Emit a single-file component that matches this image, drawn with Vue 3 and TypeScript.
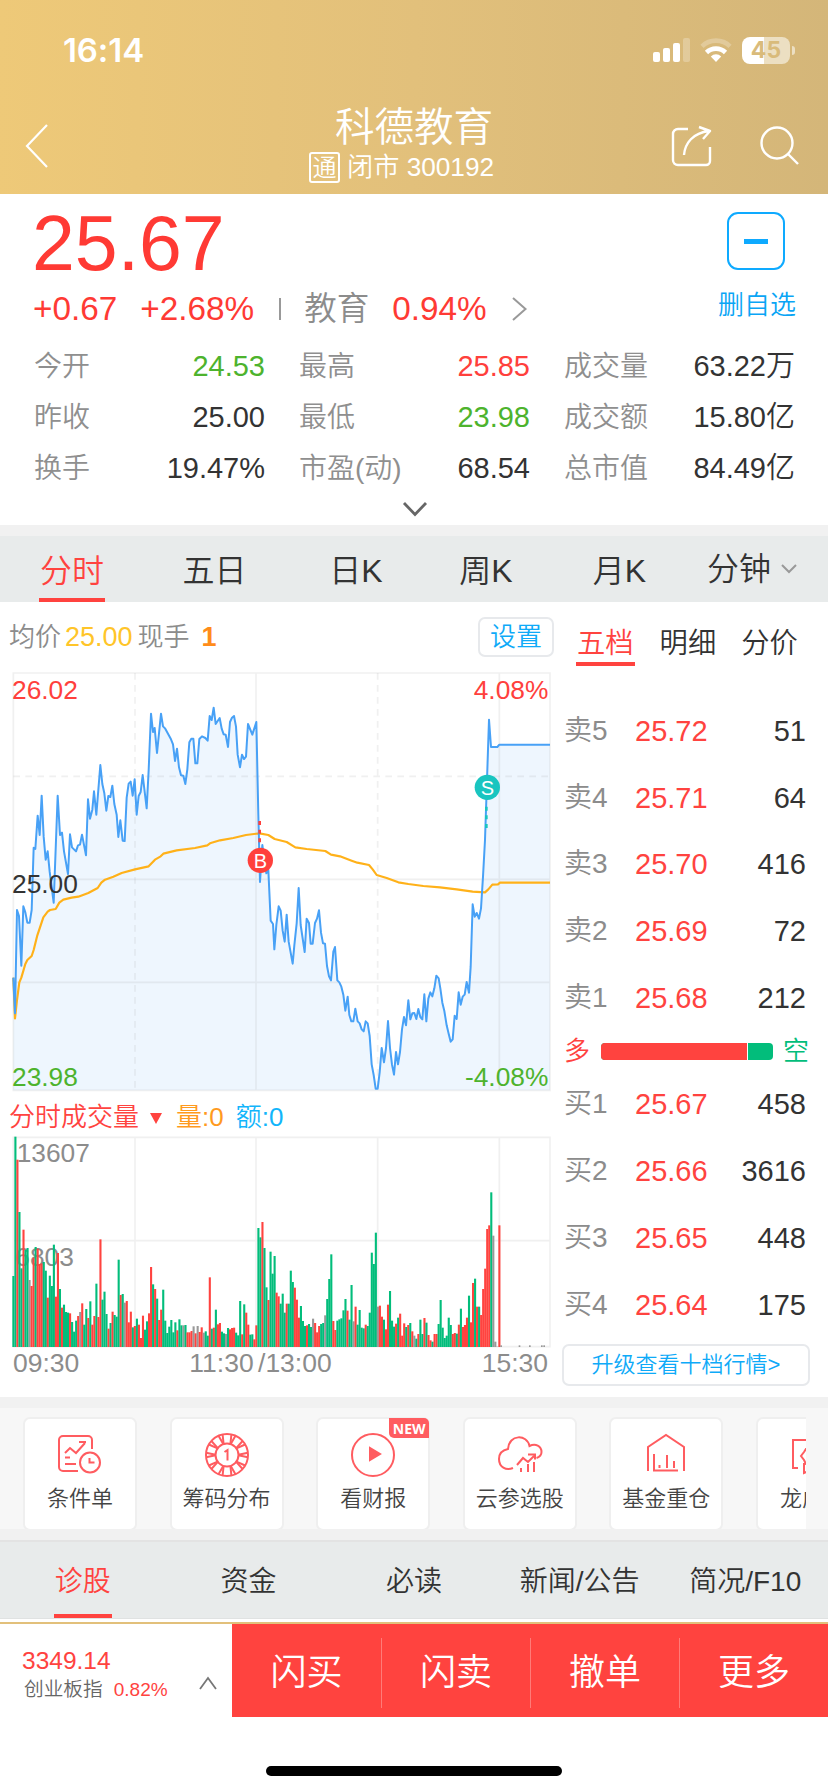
<script setup lang="ts">
interface Stat { label: string; value: string; tone?: 'up' | 'down' }
interface Quote { name: string; price: string; qty: string }
interface Bar { x: number; top: number; tone: string }

const stats: Stat[] = [
  { label: '今开', value: '24.53', tone: 'down' },
  { label: '最高', value: '25.85', tone: 'up' },
  { label: '成交量', value: '63.22万' },
  { label: '昨收', value: '25.00' },
  { label: '最低', value: '23.98', tone: 'down' },
  { label: '成交额', value: '15.80亿' },
  { label: '换手', value: '19.47%' },
  { label: '市盈(动)', value: '68.54' },
  { label: '总市值', value: '84.49亿' },
]

const asks: Quote[] = [
  { name: '卖5', price: '25.72', qty: '51' },
  { name: '卖4', price: '25.71', qty: '64' },
  { name: '卖3', price: '25.70', qty: '416' },
  { name: '卖2', price: '25.69', qty: '72' },
  { name: '卖1', price: '25.68', qty: '212' },
]
const bids: Quote[] = [
  { name: '买1', price: '25.67', qty: '458' },
  { name: '买2', price: '25.66', qty: '3616' },
  { name: '买3', price: '25.65', qty: '448' },
  { name: '买4', price: '25.64', qty: '175' },
]

const tools = ['条件单', '筹码分布', '看财报', '云参选股', '基金重仓', '龙虎榜']
const infoTabs = ['诊股', '资金', '必读', '新闻/公告', '简况/F10']
const actions = ['闪买', '闪卖', '撤单', '更多']

// Chart units are thirds of a pixel; the afternoon series starts at x = 810.
const AFTERNOON = 810
function shift(series: string): string {
  return series.split(' ').map((p) => {
    const [x, y] = p.split(',').map(Number)
    return `${x + AFTERNOON},${y}`
  }).join(' ')
}

const priceAm = '40,953 45,1060 51,750 57,768 64,917 70,739 76,757 82,788 89,788 95,750 101,563 106,567 113,467 119,525 125,407 131,530 137,599 143,574 149,635 161,728 173,407 180,525 186,518 192,574 204,642 210,523 216,562 228,574 234,556 240,554 246,524 258,586 264,418 270,476 277,449 282,394 289,464 301,315 307,372 313,400 319,452 325,408 331,411 337,377 343,432 350,464 355,531 361,481 368,542 374,543 380,413 386,371 392,365 398,407 404,358 410,464 416,408 422,396 428,345 440,445 446,330 453,161 459,216 464,204 471,279 483,161 489,199 495,205 513,238 519,253 525,303 531,266 537,322 543,346 550,347 556,372 562,328 568,247 574,236 580,236 586,310 592,310 598,237 606,229 616,234 623,242 629,168 635,180 641,143 647,192 659,174 665,206 671,223 677,224 684,261 690,186 696,173 702,168 708,200 713,284 720,322 726,284 732,297 738,290 744,192 757,224 769,186 775,464 780,666 787,555 793,600 799,640 805,630 812,782'
const pricePm = '9,792 13,868 19,795 26,739 32,752 38,812 44,845 50,764 56,845 68,911 73,856 80,790 86,684 92,795 104,876 110,776 117,789 122,851 128,851 135,789 141,776 147,751 153,818 159,850 165,851 171,918 177,949 183,961 190,875 195,861 202,961 208,967 214,980 220,1004 226,1052 233,1010 238,1065 244,1084 250,1084 256,1046 263,1084 269,1090 275,1108 281,1114 287,1084 293,1090 299,1128 305,1213 311,1245 317,1286 323,1286 329,1237 335,1164 342,1207 348,1164 354,1083 360,1164 366,1214 372,1244 378,1176 384,1213 390,1176 396,1108 402,1071 408,1096 415,1021 421,1078 427,1060 433,1059 439,1077 445,1047 451,1071 457,1078 463,1003 469,1084 475,1016 481,997 487,1009 493,985 499,947 506,955 511,985 517,1028 523,1053 530,1096 536,1121 542,1145 548,1138 554,1067 560,1077 566,997 572,1034 578,1010 584,1004 590,966 597,998 602,920 608,733 614,770 620,759 627,776 633,745 639,650 645,540 649,420 657,179 663,261 682,261 688,254 840,254'
const avgAm = '40,953 45,1075 51,1020 58,967 64,953 76,912 82,900 95,888 101,870 112,826 124,790 130,772 143,755 150,750 167,747 178,728 190,719 215,713 235,710 265,699 293,684 304,668 315,659 340,650 365,639 405,628 446,619 465,599 482,589 490,581 530,571 585,564 622,556 630,550 660,541 700,534 738,525 778,520 805,525'
const avgPm = '14,537 50,546 76,562 110,567 166,573 183,584 210,589 245,602 262,608 297,615 308,628 320,645 350,654 385,667 415,672 460,678 510,682 560,688 608,695 645,697 655,688 667,674 684,673 690,668 840,668'

const priceLine = `${priceAm} ${shift(pricePm)}`
const avgLine = `${avgAm} ${shift(avgPm)}`
const priceArea = `${priceLine} 1650,1291 40,1291`

// One token per minute: tone (g fall, r rise, n flat) and bar top.
const volume = 'g558 g140 r209 g366 g535 r419 g480 g474 n570 r588 r503 g471 r476 r522 r520 g516 g542 r623 g557 g588 g464 r620 r489 g597 r653 g644 g666 g668 r670 g696 g725 g692 r678 n666 r640 g704 g657 r684 g634 r704 r678 g581 r681 r448 g629 g605 g672 r716 g699 r665 g675 g680 g509 r615 g612 n638 r633 r697 r665 g712 r708 g686 r704 r744 r677 g719 g694 r670 r531 g583 r597 g626 r690 r659 g599 g692 g729 g710 g690 g727 g697 r721 g688 g706 n706 g705 r727 r727 r723 n709 r730 n708 r726 r712 n728 g724 g737 r562 g716 r713 g659 r703 r699 g725 g730 n732 g714 r718 r714 r713 g728 g736 g633 r733 g643 r668 r704 g734 g733 r748 r706 g414 g442 r396 g474 g592 r630 g485 g551 g498 r608 r619 g641 g611 g668 r641 g641 g542 g576 r593 r629 r683 g648 g693 g708 r706 g702 g711 n686 r699 r727 r708 g702 g699 n676 g627 g567 g493 r693 r720 g692 g688 g685 g661 g627 r662 g689 g585 n694 r650 g704 g660 g713 g715 r704 g708 g668 g488 g522 g428 n650 r647 r680 g689 r718 r644 g603 g692 g710 r701 g683 r671 r737 r700 g711 r705 g699 r724 n737 g746 r732 g689 g732 r684 g698 r735 r751 g755 r732 r732 g702 g630 g713 g744 g737 g683 g705 r732 r729 g731 r704 g656 r711 r705 r683 g617 r697 r579 g566 r650 g650 r675 r597 r536 r417 r406 g307 n437 n755 n770 r406'
const bars: Bar[] = volume.split(' ').map((t, i) => ({
  tone: t[0],
  top: Number(t.slice(1)),
  x: 37 + i * 6.075,
}))
const ticks = [1501, 1556, 1587, 1623, 1630]
// Chip segments around the ring icon
const spokes = Array.from({ length: 10 }, (_, i) => i * 36)
</script>

<template>
  <div class="app">
    <header class="header">
      <div class="status">
        <span class="clock">16:14</span>
        <div class="status-icons">
          <svg width="38" height="24" viewBox="0 0 38 24" fill="#fff">
            <rect x="0" y="14" width="7" height="10" rx="2" />
            <rect x="10" y="10" width="7" height="14" rx="2" />
            <rect x="20" y="5" width="7" height="19" rx="2" />
            <rect x="30" y="0" width="7" height="24" rx="2" opacity=".25" />
          </svg>
          <svg class="wifi" width="32" height="24" viewBox="0 0 32 24" fill="none" stroke="#fff" stroke-width="4.6">
            <path d="M2 8.300a20 20 0 0 1 28 0" opacity=".25" />
            <path d="M6.500 14.500a13.500 13.500 0 0 1 19 0" />
            <path d="M16 24l-5.200-5.600a7.500 7.500 0 0 1 10.400 0z" fill="#fff" stroke="none" />
          </svg>
          <div class="battery"><span class="pct">45</span></div>
          <div class="nub"></div>
        </div>
      </div>
      <div class="nav">
        <svg class="back" width="24" height="44" viewBox="0 0 24 44" fill="none" stroke="#fff" stroke-width="2.2">
          <path d="M22 1L2 22l20 21" />
        </svg>
        <div class="title">
          <div class="name">科德教育</div>
          <div class="sub"><span class="tong">通</span><span>闭市 300192</span></div>
        </div>
        <div class="nav-icons">
          <svg width="42" height="42" viewBox="0 0 42 42" fill="none" stroke="#fff" stroke-width="2.4" stroke-linejoin="round">
            <path d="M17 4H7a5 5 0 0 0-5 5v26a5 5 0 0 0 5 5h28a4 4 0 0 0 4-4V22" />
            <path d="M13 30C14 18 22 8 38 6M28 2l11 4-7 8" />
          </svg>
          <svg width="42" height="42" viewBox="0 0 42 42" fill="none" stroke="#fff" stroke-width="2.4">
            <circle cx="19" cy="18" r="15.5" /><path d="M30 29l10 10" />
          </svg>
        </div>
      </div>
    </header>

    <section class="quote">
      <div class="quote-top">
        <div>
          <div class="price">25.67</div>
          <div class="change">
            <span>+0.67</span><span class="pc">+2.68%</span><i class="sep"></i>
            <span class="sector">教育</span><span class="sector-pc">0.94%</span>
            <svg width="16" height="24" viewBox="0 0 16 24" fill="none" stroke="#999" stroke-width="2"><path d="M1 1l12.500 11L1 23" /></svg>
          </div>
        </div>
        <div class="watch">
          <div class="minus"><i></i></div>
          <span>删自选</span>
        </div>
      </div>
      <div class="stats">
        <div v-for="s in stats" :key="s.label" class="stat">
          <span class="label">{{ s.label }}</span><span :class="s.tone">{{ s.value }}</span>
        </div>
      </div>
      <svg class="expand" width="26" height="18" viewBox="0 0 26 18" fill="none" stroke="#666" stroke-width="2.8"><path d="M2 2l11 11.500L24 2" /></svg>
    </section>

    <nav class="periods">
      <span class="on">分时</span><span>五日</span><span>日K</span><span>周K</span><span>月K</span>
      <span class="minutes">分钟<svg width="16" height="10" viewBox="0 0 16 10" fill="none" stroke="#999" stroke-width="2"><path d="M1 1l7 7 7-7" /></svg></span>
    </nav>

    <section class="market">
      <div class="charts">
        <div class="chart-head">
          <span>均价</span><span class="avg">25.00</span><span>现手</span><span class="now">1</span>
          <button class="set">设置</button>
        </div>
        <svg class="price-chart" width="556" height="426" viewBox="0 30 1668 1278">
          <polygon :points="priceArea" class="area" />
          <g class="grid">
            <path d="M40 39H1650V1291H40ZM768 39V1291M1498 39V1291M40 658H1650M40 967H1650" />
            <path d="M405 39V1291M1133 39V1291M40 349H1650" class="dash" />
          </g>
          <polyline :points="avgLine" class="line avg-line" />
          <polyline :points="priceLine" class="line price-line" />
          <path d="M779 483V560" class="mark-b" />
          <path d="M1459 440V512" class="mark-s" />
          <circle cx="781" cy="601" r="38" fill="#ff403c" />
          <circle cx="1462" cy="382" r="38" fill="#19c5c0" />
          <text x="781" y="623" class="mark">B</text>
          <text x="1462" y="405" class="mark">S</text>
          <text x="36" y="118" class="t up">26.02</text>
          <text x="36" y="698" class="t">25.00</text>
          <text x="36" y="1279" class="t down">23.98</text>
          <text x="1645" y="118" class="t up end">4.08%</text>
          <text x="1645" y="1279" class="t down end">-4.08%</text>
        </svg>
        <div class="vol-head">
          <span class="vt">分时成交量</span><i class="caret"></i><span class="vq">量:0</span><span class="va">额:0</span>
        </div>
        <svg class="vol-chart" width="556" height="218" viewBox="0 126 1668 654">
          <path d="M40 142H1650V770H40ZM405 142V770M768 142V770M1133 142V770M1498 142V770M40 452H1650" class="grid" />
          <text x="50" y="215" class="t muted">13607</text>
          <text x="46" y="527" class="t muted">6803</text>
          <rect v-for="b in bars" :key="b.x" :x="b.x" :y="b.top" width="6.3" :height="771 - b.top" :class="b.tone" />
          <rect v-for="x in ticks" :key="x" :x="x" y="766" width="5" height="5" class="n" />
        </svg>
        <div class="times"><span>09:30</span><span class="noon">11:30 <i>/13:00</i></span><span>15:30</span></div>
      </div>

      <aside class="book">
        <div class="book-tabs"><span class="on">五档</span><span>明细</span><span>分价</span></div>
        <div class="rows">
          <div v-for="q in asks" :key="q.name" class="row"><span>{{ q.name }}</span><b>{{ q.price }}</b><em>{{ q.qty }}</em></div>
        </div>
        <div class="ratio"><span class="duo">多</span><div class="meter"><i></i></div><span class="kong">空</span></div>
        <div class="rows">
          <div v-for="q in bids" :key="q.name" class="row"><span>{{ q.name }}</span><b>{{ q.price }}</b><em>{{ q.qty }}</em></div>
        </div>
        <button class="upgrade">升级查看十档行情&gt;</button>
      </aside>
    </section>

    <section class="shelf">
      <div class="cards">
        <div v-for="(t, i) in tools" :key="t" class="card">
          <svg width="48" height="48" viewBox="0 0 48 48" class="ico">
            <template v-if="i === 0">
              <path d="M22 40H7a4 4 0 0 1-4-4V9a4 4 0 0 1 4-4h25a4 4 0 0 1 4 4v9M9 22l5-5 6 5 9-10M23 11h7M9 26.500h5M9 33h11" />
              <circle cx="34" cy="31.500" r="10" /><path d="M33.500 27v4.500h5" />
            </template>
            <template v-else-if="i === 1">
              <circle cx="24" cy="24" r="21" /><circle cx="24" cy="24" r="11.500" />
              <path v-for="a in spokes" :key="a" d="M20.600 13L19.600 3.500M27.400 13l1-9.500" :transform="`rotate(${a} 24 24)`" />
              <path d="M21.500 21l3-2v10.500" />
            </template>
            <template v-else-if="i === 2">
              <circle cx="24" cy="24" r="21" /><path d="M21 17v12l10-6z" fill="#ff5c60" />
            </template>
            <template v-else-if="i === 3">
              <path d="M17 37C10 40 3 36 3 28c0-6 4-9 9-10C13 3 31 3 33.500 15c6-3 12 0 12 6 0 3-2 5-5 6M21 34l6-7 5 4 6-6M32 23.500h7v5M25 37v4M32 33v8M38 31v10" />
            </template>
            <template v-else-if="i === 4">
              <path d="M6 40V16L24 4l18 12v24M12 23v16.500h24M17.500 34v3M25 24v13M32 30v7" />
            </template>
            <template v-else>
              <path d="M9 37H4V9h38M22 17l-5 1-2 3-3 4 3 4 2 4 5 1M15 32v10l7-3" />
            </template>
          </svg>
          <span>{{ t }}</span>
          <div v-if="i === 2" class="new">NEW</div>
        </div>
      </div>
    </section>

    <nav class="info-tabs">
      <span v-for="(t, i) in infoTabs" :key="t" :class="{ on: i === 0 }">{{ t }}</span>
    </nav>

    <footer class="footer">
      <div class="index">
        <div>
          <div class="idx">3349.14</div>
          <div class="idx-sub">创业板指<span>0.82%</span></div>
        </div>
        <svg width="18" height="14" viewBox="0 0 18 14" fill="none" stroke="#777" stroke-width="1.800"><path d="M1 13L9 2l8 11" /></svg>
      </div>
      <div class="actions"><span v-for="a in actions" :key="a">{{ a }}</span></div>
    </footer>
    <div class="home"></div>
  </div>
</template>

<style>
html, body { margin: 0; background: #fff; }
</style>

<style scoped>
.app { width: 828px; height: 1792px; overflow: hidden; background: #fff; color: #333; font-family: "Liberation Sans", "Noto Sans CJK SC", sans-serif; font-weight: 350; }
.app *, .app { box-sizing: border-box; }
svg { display: block; flex: none; }
i, em { font-style: normal; }
button { font-family: inherit; font-weight: inherit; background: #fff; color: #0eaaf8; padding: 0; border: 2px solid #e7e9ec; border-radius: 7px; }
.up { color: #ff403c; }
.down { color: #4db32d; }

.header { height: 194px; background: linear-gradient(91deg, #eec978, #e2c07b 50%, #d4b679); color: #fff; }
.status { height: 100px; display: flex; justify-content: space-between; padding: 0 33px 0 63px; align-items: center; }
.clock { font: 600 33px/40px Inter, sans-serif; letter-spacing: -.1px; }
.status-icons { display: flex; align-items: center; }
.wifi { margin: 0 10px 0 9px; }
.battery { width: 48px; height: 27px; border-radius: 8px; background: linear-gradient(90deg, #fff 46%, #ecdfc2 46%); text-align: center; }
.pct { display: block; font: 700 23px/27px Inter, sans-serif; color: #d9bb7b; }
.nub { width: 3px; height: 9px; margin-left: 2px; border-radius: 0 3px 3px 0; background: #ecdfc2; }
.nav { height: 94px; display: grid; grid-template-columns: 1fr 200px 1fr; }
.back { margin: 24px 0 0 25px; }
.title { display: flex; flex-direction: column; align-items: center; }
.name { font-size: 39.500px; line-height: 54px; }
.sub { display: flex; align-items: center; height: 32px; margin: -3px 25px 0 0; font-size: 26.200px; line-height: 32px; gap: 7px; white-space: nowrap; }
.tong { width: 31px; height: 31px; border: 2px solid #fff; border-radius: 3px; font-size: 24px; line-height: 28px; display: flex; justify-content: center; }
.nav-icons { display: flex; justify-content: flex-end; gap: 45px; padding: 25px 28px 0 0; }

.quote { height: 331px; padding: 0 33px 0 34px; }
.quote-top { display: flex; justify-content: space-between; color: #ff3a34; }
.price { font-size: 77px; line-height: 80px; margin: 9px 0 0 -2px; white-space: nowrap; }
.change { display: flex; align-items: center; height: 40px; margin-top: 6px; margin-left: -1px; font-size: 33.300px; line-height: 40px; }
.pc { margin-left: 23px; }
.sep { width: 2px; height: 22px; background: #999; margin: 0 23px 0 25px; }
.sector { font-size: 32.500px; color: #8c8c8c; }
.sector-pc { margin: 0 25px 0 23px; }
.watch { display: flex; flex-direction: column; align-items: center; color: #0aa5f5; font-size: 26px; line-height: 36px; margin: 18px -1px 0 0; }
.minus { width: 58px; height: 58px; margin-left: -1px; border: 2px solid #0eaaff; border-radius: 11px; display: flex; align-items: center; justify-content: center; margin-bottom: 17px; }
.minus i { width: 24px; height: 5px; background: #0eaaff; }
.stats { display: grid; grid-template-columns: 231px 231px 231px; column-gap: 34px; grid-auto-rows: 51px; margin-top: 12px; }
.stat { display: flex; justify-content: space-between; font-size: 29px; line-height: 51px; }
.label { font-size: 28px; color: #8f8f8f; }
.expand { margin: 7px auto 0; }

.periods { display: grid; grid-template-columns: 144px 141px 142px 118px 149px 112px; height: 77px; border-top: 11px solid #f1f1f1; background: #e8ebeb; font-size: 32px; line-height: 70px; text-align: center; }
.periods span { justify-self: center; height: 66px; }
.on { color: #ff433f; border-bottom: 4px solid #ff433f; padding: 0 1px; }
.minutes { display: flex; align-items: center; gap: 10px; margin-right: -4px; }

.market { height: 795px; display: flex; }
.charts { width: 556px; }
.chart-head { height: 68px; padding: 1px 0 0 9px; display: flex; align-items: center; font-size: 26px; line-height: 36px; color: #8c8c8c; }
.avg { color: #ffc529; margin: 0 5px 0 4px; font-size: 27px; }
.now { color: #ff8c1a; margin-left: 12px; font-weight: 600; font-size: 27px; }
.set { width: 76px; height: 40px; margin: 0 2px 0 auto; font-size: 26px; line-height: 34px; }
.grid { fill: none; stroke: #999; stroke-opacity: .15; stroke-width: 5; }
.dash { stroke-dasharray: 20 16; }
.area { fill: #eef6fe; }
.line { fill: none; stroke-linejoin: round; }
.price-line { stroke: #48a1f6; stroke-width: 6; }
.avg-line { stroke: #ffb119; stroke-width: 6.5; }
.mark-b { stroke: #ff403c; stroke-width: 8; stroke-dasharray: 12 14; }
.mark-s { stroke: #19c5c0; stroke-width: 8; stroke-dasharray: 12 14; }
.mark { fill: #fff; font-size: 60px; text-anchor: middle; }
.t { font-size: 79px; fill: #333; }
.t.up { fill: #ff403c; }
.t.down { fill: #4db32d; }
.t.muted { fill: #8c8c8c; }
.end { text-anchor: end; }
.vol-head { height: 36px; padding: 6px 0 0 9px; display: flex; align-items: center; font-size: 26px; line-height: 30px; }
.vt { color: #ff433f; }
.caret { border: 6px solid transparent; border-top: 11px solid #ff433f; border-bottom: 0; margin: 2px 14px 0 11px; }
.vq { color: #ff9a1e; margin-right: 12px; }
.va { color: #12b5fb; }
.vol-chart .g { fill: #02bd7b; }
.vol-chart .r { fill: #ff433f; }
.vol-chart .n { fill: #999; }
.times { display: flex; justify-content: space-between; margin-top: -2px; padding: 0 8px 0 13px; font-size: 26.500px; line-height: 30px; color: #8c8c8c; }
.noon { margin-right: 40px; }
.noon i { margin-left: -3px; }

.book { width: 254px; margin-left: 7px; }
.book-tabs { display: flex; gap: 25px; margin-left: 13px; padding-top: 20px; font-size: 28.300px; line-height: 42px; white-space: nowrap; }
.book-tabs span { height: 44px; }
.rows { padding: 0 11px 0 1px; }
.row { display: grid; grid-template-columns: 71px 90px 1fr; height: 66.700px; line-height: 66.700px; font-size: 28px; }
.book-tabs + .rows { margin-top: 32px; }
.row span { color: #8c8c8c; }
.row b { color: #ff433f; font-weight: inherit; font-size: 29px; }
.row em { text-align: right; font-size: 29px; }
.ratio { display: flex; align-items: center; height: 40px; font-size: 26px; line-height: 40px; padding-left: 1px; }
.duo { color: #ff433f; }
.kong { color: #02bd7b; }
.meter { width: 172px; height: 17px; margin: 0 10px 0 11px; border-radius: 4px; overflow: hidden; background: #02bd7b; }
.meter i { display: block; width: 147px; height: 100%; background: #ff433f; border-right: 1px solid #fff; }
.upgrade { width: 248px; height: 42px; margin: 6px 0 0 -1px; font-size: 22px; line-height: 38px; white-space: nowrap; display: block; }

.shelf { height: 143px; border-top: 11px solid #f1f1f1; border-bottom: 11px solid #f1f1f1; background: #f7f7f7; padding: 9px 22px 0 23px; }
.cards { display: flex; gap: 32.600px; overflow: hidden; height: 112px; }
.card { position: relative; flex: none; width: 114px; height: 114px; border: 2px solid #efefef; border-radius: 7px; background: #fff; display: flex; flex-direction: column; align-items: center; font-size: 22px; line-height: 30px; color: #444; }
.card span { margin-top: 5px; white-space: nowrap; }
.ico { margin-top: 12px; fill: none; stroke: #ff5c60; stroke-width: 2; }
.new { position: absolute; right: -1px; top: -1px; width: 40px; height: 20px; border-radius: 0 5px 0 5px; background: #ff5c60; color: #fff; font: 700 14px/21px "Open Sans", sans-serif; text-align: center; }

.info-tabs { height: 79px; border-top: 2px solid #e3e3e3; border-bottom: 1px solid #e0e2e2; background: #e8ebeb; display: grid; grid-template-columns: repeat(5, 1fr); font-size: 28px; text-align: center; line-height: 79px; }
.info-tabs span { justify-self: center; white-space: nowrap; height: 76px; }

.footer { margin-top: 3px; height: 95px; border-top: 2px solid #e2c07b; display: flex; }
.index { width: 232px; display: flex; justify-content: space-between; padding: 23px 15px 0 22px; color: #ff433f; }
.index svg { margin-top: 29px; }
.idx { font-size: 24.500px; line-height: 28px; }
.idx-sub { font-size: 19.700px; line-height: 29px; color: #666; padding-left: 2px; }
.idx-sub span { color: #ff433f; margin-left: 11px; font-size: 19px; }
.actions { flex: 1; background: #ff433f; color: #fff; display: grid; grid-template-columns: repeat(4, 1fr); padding: 14px 0 9px; font-size: 36px; line-height: 69px; text-align: center; }
.actions span + span { border-left: 1px solid #ff7b78; }
.home { width: 296px; height: 10px; border-radius: 5px; background: #000; margin: 49px auto 0; }
</style>
